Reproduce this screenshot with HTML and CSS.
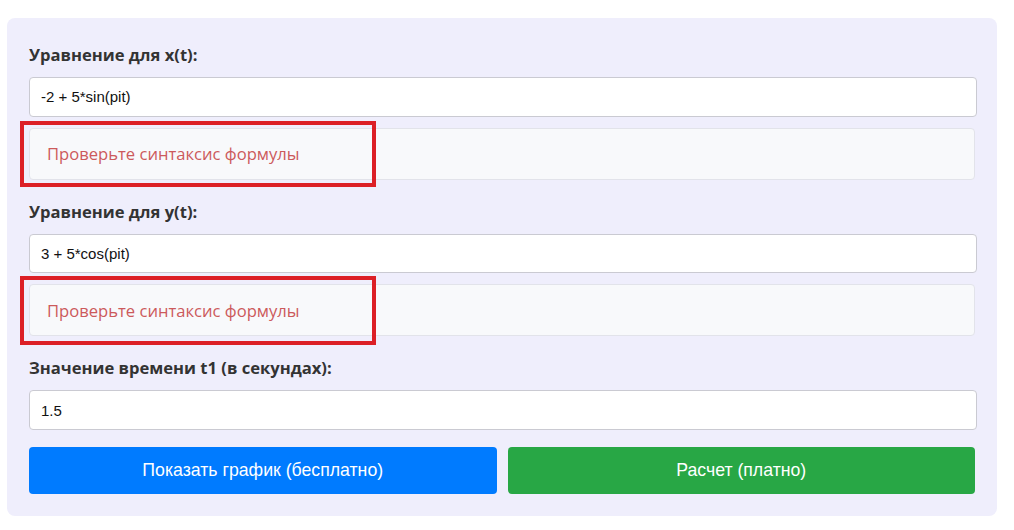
FILE: index.html
```html
<!DOCTYPE html>
<html lang="ru">
<head>
<meta charset="utf-8">
<title>Уравнения</title>
<link rel="stylesheet" href="styles.css">
</head>
<body>
<div class="card">
  <label class="label">Уравнение для x(t):</label>
  <input class="field" type="text" value="-2 + 5*sin(pit)">
  <div class="error-wrap">
    <div class="error">Проверьте синтаксис формулы</div>
    <div class="mark"></div>
  </div>

  <label class="label">Уравнение для y(t):</label>
  <input class="field" type="text" value="3 + 5*cos(pit)">
  <div class="error-wrap">
    <div class="error">Проверьте синтаксис формулы</div>
    <div class="mark mark-tall"></div>
  </div>

  <label class="label">Значение времени t1 (в секундах):</label>
  <input class="field" type="text" value="1.5">

  <div class="actions">
    <button class="btn btn-blue" type="button">Показать график (бесплатно)</button>
    <button class="btn btn-green" type="button">Расчет (платно)</button>
  </div>
</div>
</body>
</html>
```

FILE: styles.css
```css
* { box-sizing: border-box; }

body {
  margin: 0;
  background: #ffffff;
  font-family: "Open Sans", "Liberation Sans", sans-serif;
}

.card {
  margin: 18px 0 0 7px;
  width: 990px;
  height: 498px;
  padding: 27px 20px 22px 22px;
  background: #efeefc;
  border-radius: 8px;
  display: flex;
  flex-direction: column;
}

.label {
  display: block;
  font-size: 16.6px;
  font-weight: 700;
  line-height: 20px;
  color: #333333;
  margin-bottom: 12px;
}

.field {
  display: block;
  width: 100%;
  height: 40px;
  padding: 0 11px;
  border: 1px solid #cacad2;
  border-radius: 4px;
  background: #ffffff;
  font-family: "Liberation Sans", Arial, sans-serif;
  font-size: 15px;
  color: #111111;
}

.error-wrap {
  position: relative;
  margin-top: 11px;
  margin-bottom: 22px;
  margin-right: 2px;
}

.error {
  height: 52px;
  padding: 0 17px;
  display: flex;
  align-items: center;
  background: #f8f9fb;
  border: 1px solid #e2e3ea;
  border-radius: 4px;
  font-family: "Open Sans", "Liberation Sans", sans-serif;
  font-size: 16.6px;
  color: #cc5a5c;
}

.mark {
  position: absolute;
  left: -9px;
  top: -7px;
  width: 356px;
  height: 66px;
  border: 4px solid #dc1f26;
  pointer-events: none;
}

.mark-tall {
  top: -8px;
  height: 69px;
}

.actions {
  margin-top: 17px;
  display: flex;
  gap: 11px;
  padding-right: 2px;
}

.btn {
  flex: 1;
  height: 47px;
  border: none;
  border-radius: 4px;
  color: #ffffff;
  font-family: "Liberation Sans", Arial, sans-serif;
  font-size: 17.7px;
}

.btn-blue { background: #007bff; }
.btn-green { background: #28a745; }
```
